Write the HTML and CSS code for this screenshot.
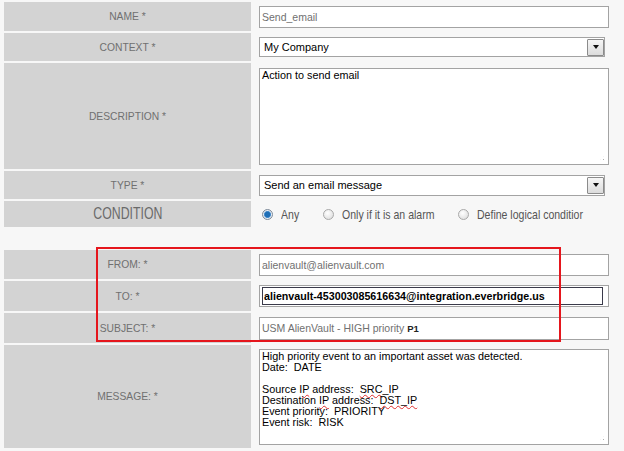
FILE: index.html
```html
<!DOCTYPE html>
<html>
<head>
<meta charset="utf-8">
<link rel="stylesheet" href="styles.css">
</head>
<body>
<div class="page">
  <div class="form">
    <div class="row h-name">
      <div class="label">NAME *</div>
      <div class="field"><div class="input muted">Send_email</div></div>
    </div>
    <div class="row h-context">
      <div class="label">CONTEXT *</div>
      <div class="field"><div class="select"><span class="sel-text">My Company</span><span class="sel-btn"><span class="tri"></span></span></div></div>
    </div>
    <div class="row h-desc">
      <div class="label">DESCRIPTION *</div>
      <div class="field"><div class="textarea desc">Action to send email<span class="grip"></span></div></div>
    </div>
    <div class="row h-type">
      <div class="label">TYPE *</div>
      <div class="field"><div class="select type-sel"><span class="sel-text">Send an email message</span><span class="sel-btn"><span class="tri"></span></span></div></div>
    </div>
    <div class="row h-cond">
      <div class="label"><span class="big">CONDITION</span></div>
      <div class="field radios">
        <span class="radio-item item-any"><span class="radio on"></span><span class="rtext">Any</span></span>
        <span class="radio-item item-alarm"><span class="radio"></span><span class="rtext">Only if it is an alarm</span></span>
        <span class="radio-item item-logic"><span class="radio"></span><span class="rtext">Define logical conditior</span></span>
      </div>
    </div>
    <div class="spacer"></div>
    <div class="row h-from">
      <div class="label">FROM: *</div>
      <div class="field"><div class="input muted">alienvault@alienvault.com</div></div>
    </div>
    <div class="row h-to">
      <div class="label">TO: *</div>
      <div class="field"><div class="input to-outer"><div class="to-inner">alienvault-453003085616634@integration.everbridge.us</div></div></div>
    </div>
    <div class="row h-subj">
      <div class="label">SUBJECT: *</div>
      <div class="field"><div class="input muted subj">USM AlienVault - HIGH priority <b class="p1">P1</b></div></div>
    </div>
    <div class="row h-msg">
      <div class="label">MESSAGE: *</div>
      <div class="field"><div class="textarea msg">High priority event to an important asset was detected.<br>Date:&nbsp; DATE<br><br>Source I<span class="sp">P</span> address:&nbsp; <span class="sp">SRC</span>_IP<br>Destination <span class="sp">IP</span> address:&nbsp; <span class="sp">DST_IP</span><br>Event priority:&nbsp; PRIORITY<br>Event risk:&nbsp; RISK<span class="grip"></span></div></div>
    </div>
  </div>
  <div class="highlight"></div>
</div>
</body>
</html>
```
FILE: styles.css
```css
html, body {
  margin: 0;
  padding: 0;
}
body {
  background: #f5f5f5;
  font-family: "Liberation Sans", Arial, sans-serif;
  width: 624px;
  height: 451px;
  overflow: hidden;
}
.page {
  position: relative;
  width: 624px;
  height: 451px;
  background: #f7f7f7;
}
.form {
  display: flex;
  flex-direction: column;
  gap: 2px;
  padding: 2px 0 0 4px;
  width: 607px;
}
.row {
  display: grid;
  grid-template-columns: 247px 1fr;
}
.h-name { height: 29px; }
.h-context { height: 28px; }
.h-desc { height: 106px; }
.h-type { height: 28px; }
.h-cond { height: 26px; }
.spacer { height: 19px; }
.h-from { height: 29px; }
.h-to { height: 30px; }
.h-subj { height: 30px; }
.h-msg { height: 103px; }

.label {
  background: #d3d3d3;
  color: #707070;
  font-size: 10.3px;
  display: flex;
  align-items: center;
  justify-content: center;
}
.big {
  display: inline-block;
  font-size: 16px;
  color: #6a6a6a;
  transform: scaleX(0.77);
}
.field {
  display: flex;
  align-items: center;
  padding-left: 8px;
}
.input {
  box-sizing: border-box;
  width: 350px;
  height: 22px;
  border: 1px solid #a3a3a3;
  background: #fff;
  font-size: 10.5px;
  color: #000;
  padding: 0 2px;
  display: flex;
  align-items: center;
}
.muted { color: #707070; }
.subj { height: 23px; }
.p1 {
  color: #222;
  font-size: 9.5px;
  margin-left: 3px;
}
.to-outer {
  padding: 2px 5px 2px 2px;
}
.to-inner {
  box-sizing: border-box;
  width: 100%;
  height: 18px;
  border: 1px solid #3a3a4a;
  font-size: 10.7px;
  font-weight: bold;
  color: #000;
  padding: 0 1px;
  display: flex;
  align-items: center;
}
.select {
  box-sizing: border-box;
  width: 346px;
  height: 20px;
  border: 1px solid #a3a3a3;
  background: #fff;
  display: flex;
  align-items: center;
  justify-content: space-between;
  font-size: 11px;
  color: #000;
  padding-left: 4px;
}
.type-sel { height: 21px; }
.sel-btn {
  box-sizing: border-box;
  width: 17px;
  height: 17px;
  border: 1px solid #8b8b8b;
  border-radius: 1px;
  background: linear-gradient(#f6f6f6, #dcdcdc);
  display: flex;
  align-items: center;
  justify-content: center;
}
.tri {
  width: 0;
  height: 0;
  border-left: 3.5px solid transparent;
  border-right: 3.5px solid transparent;
  border-top: 4px solid #111;
}
.textarea {
  position: relative;
  box-sizing: border-box;
  width: 350px;
  border: 1px solid #a3a3a3;
  background: #fff;
  font-size: 10.8px;
  color: #000;
  padding: 1px 2px;
  line-height: 11px;
}
.desc { height: 97px; }
.msg { height: 96px; }
.sp {
  text-decoration: underline wavy #e03030;
  text-decoration-thickness: 1px;
  text-underline-offset: 1px;
}
.grip {
  position: absolute;
  right: 2px;
  bottom: 2px;
  width: 7px;
  height: 7px;
  background:
    radial-gradient(circle, #b0b0b0 0.8px, transparent 1px) 0 0 / 3px 3px;
  clip-path: polygon(100% 0, 100% 100%, 0 100%);
}
.radios {
  color: #555;
  font-size: 13px;
  white-space: nowrap;
}
.radio-item {
  display: inline-flex;
  align-items: center;
  flex: none;
}
.item-any { width: 61px; }
.item-alarm { width: 135px; }
.item-logic { width: 130px; }
.radio {
  box-sizing: border-box;
  flex: none;
  width: 11px;
  height: 11px;
  border-radius: 50%;
  border: 1px solid #a9a9a9;
  background: radial-gradient(circle at 40% 35%, #ffffff, #d8d8d8);
  margin: 0 8px 0 3px;
}
.radio.on {
  border-color: #7d8a99;
  background: radial-gradient(circle at 50% 50%, #1f6fb6 0, #1f6fb6 2.5px, #5a9ad6 3.3px, #e8eef5 3.8px, #d0d6dd 100%);
}
.rtext {
  display: inline-block;
  transform: scaleX(0.81);
  transform-origin: left center;
}
.highlight {
  position: absolute;
  left: 96px;
  top: 247px;
  width: 465px;
  height: 95px;
  border: 2px solid #e5161d;
  box-sizing: border-box;
  pointer-events: none;
}
```
